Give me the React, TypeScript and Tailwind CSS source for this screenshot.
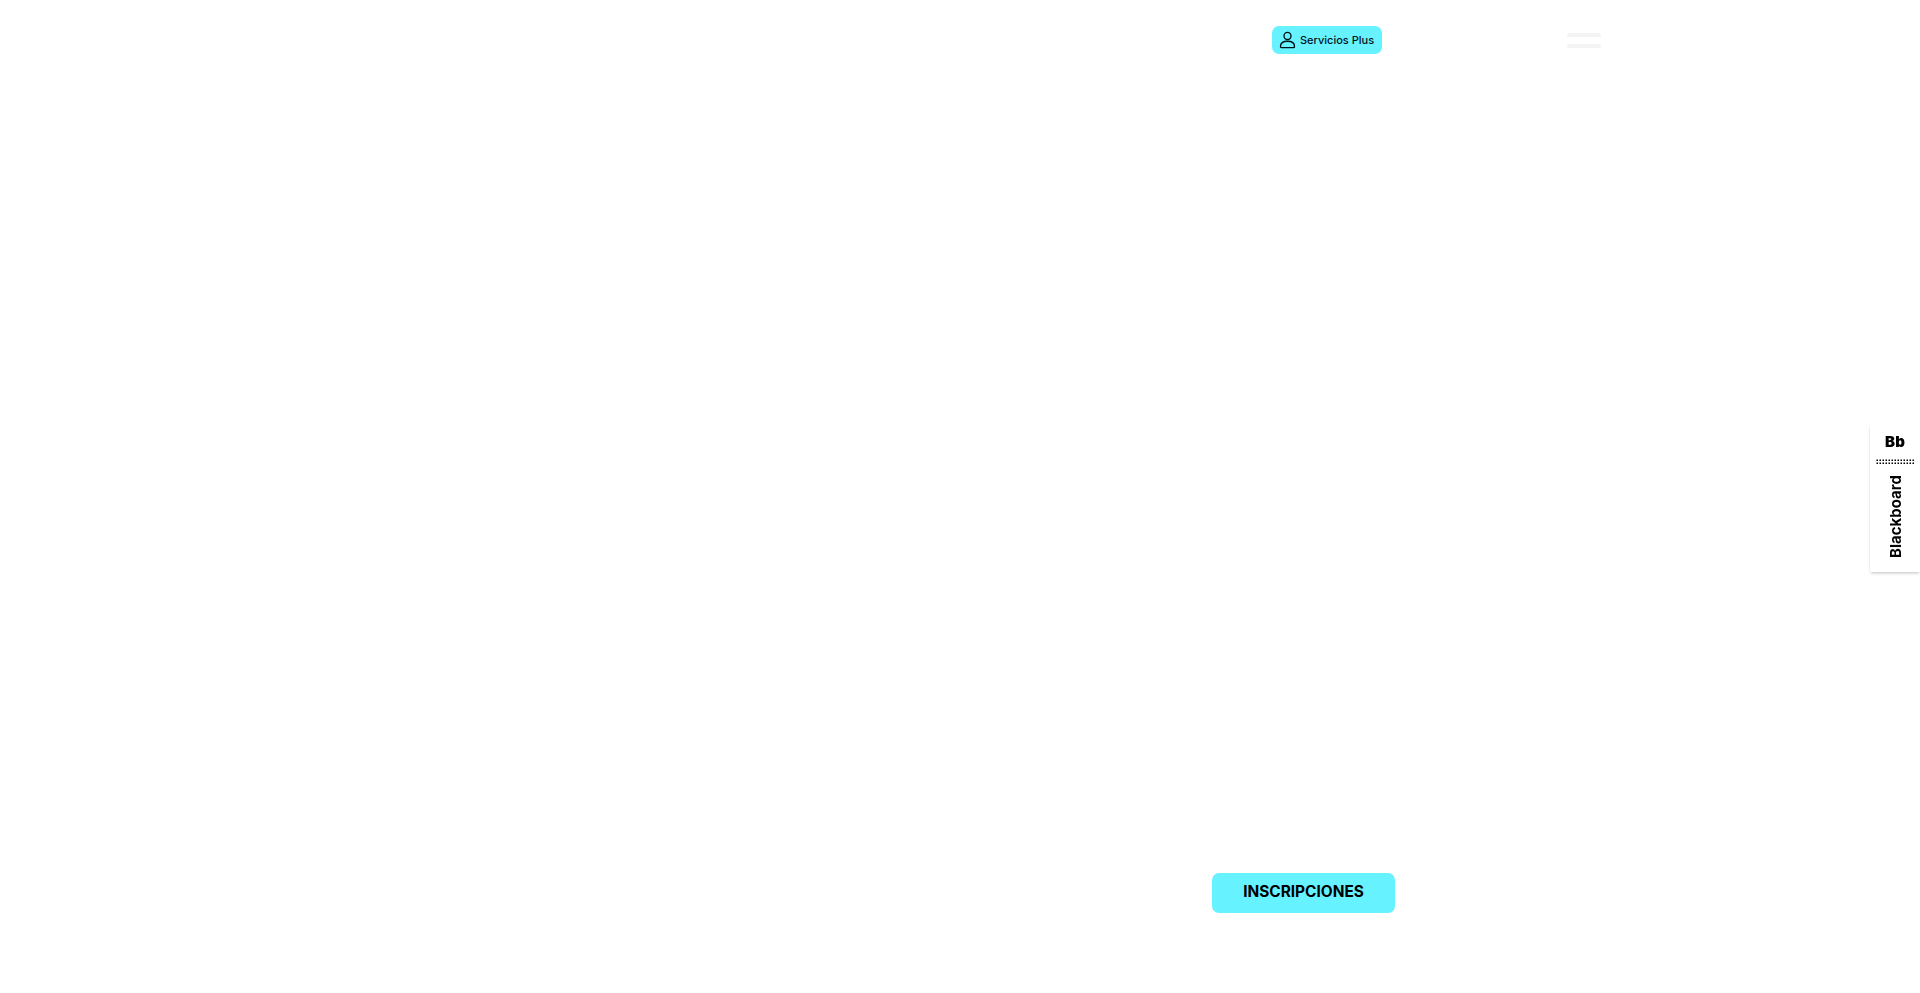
const dotColumns = Array.from({ length: 13 }, (_, i) => i)

function PersonIcon() {
  return (
    <svg className="h-[18px] w-[17px] shrink-0" fill="none" stroke="currentColor" strokeWidth={1.5} viewBox="0 0 18 20">
      <circle cx="9" cy="5.5" r="3.9" />
      <path d="M1.2 17.2c0-3.6 3.2-5.8 7.8-5.8s7.8 2.2 7.8 5.8c0 .8-.6 1.3-1.3 1.3H2.5c-.7 0-1.3-.5-1.3-1.3z" />
    </svg>
  )
}

function BlackboardTab() {
  return (
    <div className="fixed right-0 top-[424px] flex h-[148px] w-[50px] flex-col items-center bg-white pt-[9px] shadow-[0_2px_3px_-1px_rgba(0,0,0,0.25),-1px_0_2px_-1px_rgba(0,0,0,0.08)]">
      <span className="text-[15px] font-black leading-[18px] tracking-[0.2px] text-black">Bb</span>
      <svg className="ml-[1px] mt-[8px] h-[6px] w-[39px] shrink-0" viewBox="0 0 39 6">
        {dotColumns.map((col) => (
          <g key={col}>
            <rect fill="#000" height="1.5" width="1.5" x={col * 3 + 0.5} y="0.5" />
            <rect fill="#000" height="1.5" width="1.5" x={col * 3 + 0.5} y="3.5" />
          </g>
        ))}
      </svg>
      <span className="ml-[1px] mt-[10px] rotate-180 text-[15px] font-bold leading-[18px] text-black [writing-mode:vertical-rl]">
        Blackboard
      </span>
    </div>
  )
}

export default function App() {
  return (
    <div className="flex h-[993px] flex-col overflow-hidden bg-white font-['Inter',sans-serif] text-black">
      <header className="flex items-start pl-[1272px] pt-[26px]">
        <a className="flex h-[28px] w-[110px] items-center gap-[4px] rounded-[7px] bg-[#66f3ff] pl-[7px] text-[#04121a]" href="#">
          <PersonIcon />
          <span className="text-[11px] font-medium leading-none">Servicios Plus</span>
        </a>
        <div className="ml-[185px] mt-[7px] flex w-[34px] flex-col gap-[7px]">
          <div className="h-[4px] rounded-full bg-[#f4f4f4]" />
          <div className="h-[4px] rounded-full bg-[#f4f4f4]" />
        </div>
      </header>
      <main className="flex-1" />
      <div className="pb-[80px] pl-[1212px]">
        <button className="h-[40px] w-[183px] rounded-[7px] bg-[#66f3ff] pb-[2px] text-[15.4px] font-bold text-black" type="button">
          INSCRIPCIONES
        </button>
      </div>
      <BlackboardTab />
    </div>
  )
}
